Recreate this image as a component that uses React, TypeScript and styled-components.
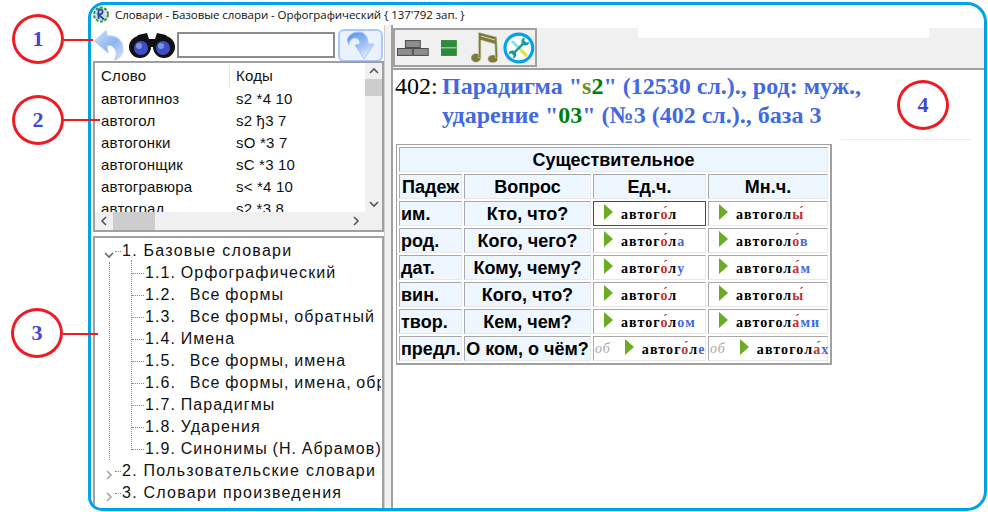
import styled, { createGlobalStyle } from "styled-components";

const GlobalStyle = createGlobalStyle`
  html, body { margin: 0; padding: 0; background: #fff; }
`;

type Part = { t: string; c?: "r" | "b"; a?: boolean };

const forms: { kase: string; question: string; sg: Part[]; pl: Part[]; prep?: boolean }[] = [
  {
    kase: "им.", question: "Кто, что?",
    sg: [{ t: "автог" }, { t: "о", c: "r", a: true }, { t: "л" }],
    pl: [{ t: "автогол" }, { t: "ы", c: "r", a: true }],
  },
  {
    kase: "род.", question: "Кого, чего?",
    sg: [{ t: "автог" }, { t: "о", c: "r", a: true }, { t: "л" }, { t: "а", c: "b" }],
    pl: [{ t: "автогол" }, { t: "о", c: "r", a: true }, { t: "в", c: "b" }],
  },
  {
    kase: "дат.", question: "Кому, чему?",
    sg: [{ t: "автог" }, { t: "о", c: "r", a: true }, { t: "л" }, { t: "у", c: "b" }],
    pl: [{ t: "автогол" }, { t: "а", c: "r", a: true }, { t: "м", c: "b" }],
  },
  {
    kase: "вин.", question: "Кого, что?",
    sg: [{ t: "автог" }, { t: "о", c: "r", a: true }, { t: "л" }],
    pl: [{ t: "автогол" }, { t: "ы", c: "r", a: true }],
  },
  {
    kase: "твор.", question: "Кем, чем?",
    sg: [{ t: "автог" }, { t: "о", c: "r", a: true }, { t: "л" }, { t: "ом", c: "b" }],
    pl: [{ t: "автогол" }, { t: "а", c: "r", a: true }, { t: "ми", c: "b" }],
  },
  {
    kase: "предл.", question: "О ком, о чём?", prep: true,
    sg: [{ t: "автог" }, { t: "о", c: "r", a: true }, { t: "л" }, { t: "е", c: "b" }],
    pl: [{ t: "автогол" }, { t: "а", c: "r", a: true }, { t: "х", c: "b" }],
  },
];

const words = [
  ["автогипноз", "s2 *4 10"],
  ["автогол", "s2 ђ3 7"],
  ["автогонки", "sO *3 7"],
  ["автогонщик", "sC *3 10"],
  ["автогравюра", "s< *4 10"],
  ["автоград", "s2 *3 8"],
];

const baseDicts = [
  "1.1. Орфографический",
  "1.2.\u00a0\u00a0\u00a0Все формы",
  "1.3.\u00a0\u00a0\u00a0Все формы, обратный",
  "1.4. Имена",
  "1.5.\u00a0\u00a0\u00a0Все формы, имена",
  "1.6.\u00a0\u00a0\u00a0Все формы, имена, обратный",
  "1.7. Парадигмы",
  "1.8. Ударения",
  "1.9. Синонимы (Н. Абрамов)",
];

function Word({ parts }: { parts: Part[] }) {
  return (
    <WordText>
      {parts.map((p, i) => (
        <Letter key={i} $c={p.c}>
          {p.t}
          {p.a && "\u0301"}
        </Letter>
      ))}
    </WordText>
  );
}

function Play() {
  return (
    <svg width="9" height="16" viewBox="0 0 9 16">
      <path d="M0 0 L9 8 L0 16 Z" fill="#6cab24" />
    </svg>
  );
}

function BackArrow() {
  return (
    <svg width="30" height="31" viewBox="0 0 30 31">
      <defs>
        <linearGradient id="bk" x1="0" y1="0" x2="1" y2="1">
          <stop offset="0" stopColor="#cfe0fb" />
          <stop offset="0.55" stopColor="#8fb4f2" />
          <stop offset="1" stopColor="#dbe7fb" />
        </linearGradient>
      </defs>
      <path
        d="M0.5 11 L12 0.5 L13 6 C22 5 29 10 29 19 C29 25 25 29 20 30 C23 26 23 21 20 18 C18 15 15 15 13 16 L14 23 Z"
        fill="url(#bk)"
        stroke="#b5cdf3"
      />
    </svg>
  );
}

function ForwardArrow() {
  return (
    <svg width="30" height="29" viewBox="0 0 30 29">
      <defs>
        <linearGradient id="fw" x1="0" y1="0" x2="0.6" y2="1">
          <stop offset="0" stopColor="#4f8fe8" />
          <stop offset="0.6" stopColor="#9cc0f7" />
          <stop offset="1" stopColor="#e2ecfc" />
        </linearGradient>
      </defs>
      <path
        d="M1 9 C3 3 8 1 13 1 C19 1 22 6 22 13 L28 13 L18 28 L9 14 L14 13 C14 10 12 7 9 7 C6 7 3 10 3 14 Z"
        fill="url(#fw)"
        stroke="#a9c6f5"
      />
    </svg>
  );
}

function Binoculars() {
  return (
    <BinocularsIcon width="46" height="25" viewBox="0 0 46 25">
      <path d="M9 2 L18 0 L20 6 L26 6 L28 0 L37 2 L42 9 L26 14 L20 14 L4 9 Z" fill="#111" />
      <circle cx="11" cy="14" r="11" fill="#111" />
      <circle cx="35" cy="14" r="11" fill="#111" />
      <circle cx="12" cy="15" r="7" fill="#3c50c4" />
      <circle cx="34" cy="15" r="7" fill="#3c50c4" />
      <circle cx="10" cy="13" r="3" fill="#7d8fe6" />
      <circle cx="32" cy="13" r="3" fill="#7d8fe6" />
    </BinocularsIcon>
  );
}

function Bricks() {
  return (
    <svg width="32" height="16" viewBox="0 0 32 16">
      <g fill="#8e8e8e" stroke="#4b4b4b">
        <rect x="8.5" y="0.5" width="15" height="7" />
        <rect x="0.5" y="8.5" width="15" height="7" />
        <rect x="16.5" y="8.5" width="15" height="7" />
      </g>
    </svg>
  );
}

function GreenBlock() {
  return (
    <svg width="16" height="16" viewBox="0 0 16 16">
      <rect width="16" height="16" fill="#2f8a3c" />
      <rect y="7" width="16" height="1.5" fill="#8fc79a" />
    </svg>
  );
}

function Notes() {
  return (
    <svg width="28" height="32" viewBox="0 0 28 32">
      <g fill="#7d7a3a" stroke="#d8d6c0" strokeWidth="0.6">
        <ellipse cx="5" cy="27" rx="5" ry="4.5" />
        <ellipse cx="22" cy="28" rx="5" ry="4" />
        <path d="M7.5 27 L7.5 1 L26 6 L27 27 L24.5 27 L24 13 L10 9 L10 27 Z" />
      </g>
      <path d="M10 5 L24.5 9" stroke="#d8d6c0" strokeWidth="1" />
    </svg>
  );
}

function Tools() {
  return (
    <svg width="32" height="32" viewBox="0 0 32 32">
      <circle cx="16" cy="16" r="14" fill="#fff" stroke="#00a2e8" strokeWidth="3.2" />
      <path d="M9 9 L18 18" stroke="#7fe3e0" strokeWidth="2.5" />
      <path d="M18 18 L24 24" stroke="#f5e02f" strokeWidth="3.5" />
      <path d="M10 22 L22 10" stroke="#1a9c9c" strokeWidth="2.5" />
      <path d="M22 5.5 A4 4 0 1 0 26.5 10 L23.5 10.5 L21.5 8.5 Z" fill="#1a9c9c" />
      <path d="M10 26.5 A4 4 0 1 0 5.5 22 L8.5 21.5 L10.5 23.5 Z" fill="#1a9c9c" />
    </svg>
  );
}

function AppLogo() {
  return (
    <svg width="16" height="17" viewBox="0 0 16 17">
      <circle cx="8" cy="8.5" r="7" fill="#cfe8d4" stroke="#2f9a55" strokeWidth="2" strokeDasharray="3 1.5" />
      <path d="M5.5 3.5 L5.5 13 M5.5 3.5 C11 3 11 8.5 5.5 8.5 L11 13.5" fill="none" stroke="#2a3fb5" strokeWidth="1.8" />
    </svg>
  );
}

function Chevron({ open }: { open?: boolean }) {
  return (
    <ChevronBox>
      <svg width="10" height="10" viewBox="0 0 10 10">
        <path
          d={open ? "M1 3 L5 7 L9 3" : "M3 1 L7 5 L3 9"}
          fill="none"
          stroke={open ? "#6a6a6a" : "#a6a6a6"}
          strokeWidth="1.6"
        />
      </svg>
    </ChevronBox>
  );
}

function ScrollGlyph({ d }: { d: string }) {
  return (
    <svg width="10" height="10" viewBox="0 0 10 10">
      <path d={d} fill="none" stroke="#555" strokeWidth="1.6" />
    </svg>
  );
}

export default function App() {
  return (
    <Page>
      <GlobalStyle />
      <Frame>
        <TitleBar>
          <AppLogo />
          <TitleText>Словари - Базовые словари - Орфографический {"{"} 137'792 зап. {"}"}</TitleText>
        </TitleBar>
        <Main>
          <LeftPane>
            <SearchBar>
              <BackArrow />
              <Binoculars />
              <SearchInput />
              <ForwardButton>
                <ForwardArrow />
              </ForwardButton>
            </SearchBar>
            <ListBox>
              <ListArea>
                <ListHead>
                  <HeadCell $first>Слово</HeadCell>
                  <HeadCell>Коды</HeadCell>
                </ListHead>
                {words.map(([w, c]) => (
                  <ListRow key={w}>
                    <WordCell>{w}</WordCell>
                    <CodeCell>{c}</CodeCell>
                  </ListRow>
                ))}
              </ListArea>
              <VScroll>
                <ScrollGlyph d="M1 7 L5 3 L9 7" />
                <VTrack>
                  <VThumb />
                </VTrack>
                <ScrollGlyph d="M1 3 L5 7 L9 3" />
              </VScroll>
              <HScroll>
                <ScrollGlyph d="M7 1 L3 5 L7 9" />
                <HTrack>
                  <HThumb />
                </HTrack>
                <ScrollGlyph d="M3 1 L7 5 L3 9" />
                <Corner />
              </HScroll>
            </ListBox>
            <TreeBox>
              <TreeRoot>
                <Chevron open />
                <Stub />
                <span>1. Базовые словари</span>
              </TreeRoot>
              <TreeGroup>
                {baseDicts.map((d) => (
                  <TreeLeaf key={d}>{d}</TreeLeaf>
                ))}
              </TreeGroup>
              <TreeRoot>
                <Chevron />
                <Stub />
                <span>2. Пользовательские словари</span>
              </TreeRoot>
              <TreeRoot>
                <Chevron />
                <Stub />
                <span>3. Словари произведения</span>
              </TreeRoot>
            </TreeBox>
          </LeftPane>
          <Splitter />
          <RightPane>
            <ToolStrip>
              <IconGroup>
                <Bricks />
                <GreenBlock />
                <Notes />
                <Tools />
              </IconGroup>
              <Notch />
            </ToolStrip>
            <Content>
              <Heading>
                <Count>402:</Count>
                <HeadingText>
                  Парадигма "<Code>s<CodeGreen>2</CodeGreen></Code>" (12530 сл.)., род: муж.,
                  <br />
                  ударение "<CodeGreen>03</CodeGreen>" (№3 (402 сл.)., база 3
                </HeadingText>
              </Heading>
              <TableRow>
                <Paradigm>
                  <colgroup>
                    <col width="63" />
                    <col width="127" />
                    <col width="113" />
                    <col />
                  </colgroup>
                  <tbody>
                    <tr>
                      <TitleCell colSpan={4}>Существительное</TitleCell>
                    </tr>
                    <tr>
                      <HeadTd>Падеж</HeadTd>
                      <HeadTd>Вопрос</HeadTd>
                      <HeadTd>Ед.ч.</HeadTd>
                      <HeadTd>Мн.ч.</HeadTd>
                    </tr>
                    {forms.map((f, i) => (
                      <tr key={f.kase}>
                        <CaseTd>{f.kase}</CaseTd>
                        <HeadTd>{f.question}</HeadTd>
                        <FormTd $active={i === 0}>
                          <FormInner>
                            {f.prep && <Prep>об</Prep>}
                            <Play />
                            <Word parts={f.sg} />
                          </FormInner>
                        </FormTd>
                        <FormTd>
                          <FormInner>
                            {f.prep && <Prep>об</Prep>}
                            <Play />
                            <Word parts={f.pl} />
                          </FormInner>
                        </FormTd>
                      </tr>
                    ))}
                  </tbody>
                </Paradigm>
                <Rule />
              </TableRow>
            </Content>
          </RightPane>
        </Main>
      </Frame>

      <Callout $x={12} $y={14}>1</Callout>
      <Leader $x={64} $y={39} $w={29} />
      <Callout $x={12} $y={95}>2</Callout>
      <Leader $x={64} $y={119} $w={36} />
      <Callout $x={11} $y={308}>3</Callout>
      <Leader $x={63} $y={333} $w={35} />
      <Callout $x={897} $y={80}>4</Callout>
    </Page>
  );
}

const Page = styled.div`
  position: relative;
  width: 988px;
  height: 512px;
  overflow: hidden;
  background: #fff;
  padding: 2px 1px 0 88px;
  box-sizing: border-box;
`;

const Frame = styled.div`
  height: 509px;
  box-sizing: border-box;
  border: 3px solid #00a2e8;
  border-radius: 16px 20px 20px 14px;
  overflow: hidden;
  display: flex;
  flex-direction: column;
  background: #fff;
`;

const TitleBar = styled.div`
  height: 21px;
  flex: none;
  display: flex;
  align-items: center;
  gap: 6px;
  padding-left: 2px;
  margin-top: -1px;
`;

const TitleText = styled.span`
  font: 11.5px "Open Sans", sans-serif;
  color: #111;
  white-space: nowrap;
  letter-spacing: -0.07px;
`;

const Main = styled.div`
  flex: 1;
  min-height: 0;
  display: flex;
`;

const LeftPane = styled.div`
  width: 293px;
  flex: none;
  display: flex;
  flex-direction: column;
`;

const SearchBar = styled.div`
  height: 36px;
  flex: none;
  box-sizing: border-box;
  display: flex;
  align-items: center;
  padding: 4px 0 0 3px;
`;

const BinocularsIcon = styled.svg`
  margin-left: 5px;
  flex: none;
`;

const SearchInput = styled.div`
  width: 154px;
  height: 22px;
  border: 2px solid #8c8c8c;
  margin-left: 2px;
  margin-right: 3px;
`;

const ForwardButton = styled.div`
  width: 41px;
  height: 29px;
  border: 2px solid #a9c9ff;
  border-radius: 6px;
  background: #eaf2fd;
  display: flex;
  align-items: center;
  justify-content: center;
`;

const ListBox = styled.div`
  height: 171px;
  flex: none;
  box-sizing: border-box;
  border: 2px solid #a0a0a0;
  display: grid;
  grid-template-columns: 1fr 17px;
  grid-template-rows: 1fr 18px;
  margin-left: 2px;
`;

const ListArea = styled.div`
  overflow: hidden;
  background: #fff;
  font: 15px "Liberation Sans", sans-serif;
  letter-spacing: 0.2px;
  color: #111;
`;

const ListHead = styled.div`
  display: flex;
  height: 25px;
  align-items: center;
`;

const HeadCell = styled.div<{ $first?: boolean }>`
  width: ${(p) => (p.$first ? "128px" : "auto")};
  height: 22px;
  line-height: 22px;
  padding-left: 6px;
  border-right: ${(p) => (p.$first ? "1px solid #e4e4e4" : "0")};
`;

const ListRow = styled.div`
  display: flex;
  height: 22px;
  line-height: 22px;
`;

const WordCell = styled.div`
  width: 128px;
  padding-left: 6px;
  white-space: nowrap;
`;

const CodeCell = styled.div`
  padding-left: 7px;
  white-space: nowrap;
  font-family: "Liberation Sans", "DejaVu Sans", sans-serif;
`;

const VScroll = styled.div`
  background: #f0f0f0;
  display: flex;
  flex-direction: column;
  align-items: center;
  padding: 3px 0;
`;

const VTrack = styled.div`
  flex: 1;
  width: 100%;
  padding-top: 3px;
`;

const VThumb = styled.div`
  height: 17px;
  background: #cdcdcd;
`;

const HScroll = styled.div`
  grid-column: 1 / 3;
  background: #f0f0f0;
  display: flex;
  align-items: center;
  padding-left: 4px;
`;

const HTrack = styled.div`
  flex: 1;
  height: 100%;
  padding-left: 4px;
`;

const HThumb = styled.div`
  width: 42px;
  height: 100%;
  background: #cdcdcd;
`;

const Corner = styled.div`
  width: 21px;
  flex: none;
`;

const TreeBox = styled.div`
  flex: 1;
  min-height: 0;
  margin: 4px 0 0 2px;
  box-sizing: border-box;
  border: solid #a0a0a0;
  border-width: 2px 2px 0 2px;
  padding-top: 2px;
  overflow: hidden;
  font: 16px "Liberation Sans", sans-serif;
  letter-spacing: 1.1px;
  color: #111;
  white-space: nowrap;
`;

const TreeRoot = styled.div`
  height: 22px;
  display: flex;
  align-items: center;
  padding-left: 9px;
  letter-spacing: 1.25px;
`;

const ChevronBox = styled.span`
  width: 10px;
  height: 10px;
  display: block;
  flex: none;
`;

const Stub = styled.span`
  width: 6px;
  border-top: 1px dotted #8a8a8a;
  margin: 0 1px 0 1px;
`;

const TreeGroup = styled.div`
  margin-left: 14px;
  border-left: 1px dotted #8a8a8a;
  padding-left: 21px;
  position: relative;
  &::before {
    content: "";
    position: absolute;
    left: 21px;
    top: -2px;
    bottom: 10px;
    border-left: 1px dotted #8a8a8a;
  }
`;

const TreeLeaf = styled.div`
  height: 22px;
  line-height: 22px;
  padding-left: 14px;
  position: relative;
  width: 236px;
  overflow: hidden;
  word-spacing: -1px;
  &::before {
    content: "";
    position: absolute;
    left: 1px;
    width: 12px;
    top: 11px;
    border-top: 1px dotted #8a8a8a;
  }
`;

const Splitter = styled.div`
  width: 9px;
  flex: none;
  box-sizing: border-box;
  background: #f0f0f0;
  border-left: 1px solid #d0d0d0;
  border-right: 2px solid #a0a0a0;
`;

const RightPane = styled.div`
  flex: 1;
  min-width: 0;
  display: flex;
  flex-direction: column;
`;

const ToolStrip = styled.div`
  height: 40px;
  flex: none;
  margin-top: 3px;
  background: #f0f0f0;
  display: flex;
  align-items: flex-start;
`;

const IconGroup = styled.div`
  width: 144px;
  height: 39px;
  box-sizing: border-box;
  border: 2px solid #a0a0a0;
  display: flex;
  align-items: center;
  padding-left: 2px;
  gap: 12px;
  & > svg:nth-child(3) { margin-left: 2px; margin-top: -1px; }
  & > svg:nth-child(4) { margin-left: -7px; }
`;

const Notch = styled.div`
  width: 291px;
  height: 10px;
  background: #fff;
  margin-left: 101px;
`;

const Content = styled.div`
  flex: 1;
  min-height: 0;
  border-top: 2px solid #a0a0a0;
  padding: 2px 0 0 3px;
`;

const Heading = styled.div`
  display: flex;
  align-items: flex-start;
  margin-left: -1px;
  line-height: 29px;
`;

const Count = styled.div`
  width: 47px;
  flex: none;
  font: 24px/29px "Liberation Serif", serif;
  color: #000;
`;

const HeadingText = styled.div`
  font: bold 24px/29px "Liberation Serif", serif;
  color: #4169e1;
  white-space: nowrap;
`;

const Code = styled.span`
  color: #6b8e23;
`;

const CodeGreen = styled.span`
  color: #008000;
`;

const TableRow = styled.div`
  display: flex;
  align-items: flex-start;
  margin-top: 14px;
`;

const Rule = styled.div`
  width: 130px;
  height: 1px;
  margin: -5px 0 0 9px;
  background: #ececec;
`;

const Paradigm = styled.table`
  flex: none;
  width: 436px;
  table-layout: fixed;
  border-collapse: separate;
  border-spacing: 2px;
  border: solid #a0a0a0;
  border-width: 1px 2px 2px 1px;
  font: bold 18px/1 "Liberation Sans", sans-serif;
  color: #000;
  & td {
    padding: 0;
    height: 23px;
    box-sizing: content-box;
    border: 1px solid #e6e6e6;
    border-color: #a8a8a8 #e8e8e8 #e8e8e8 #a8a8a8;
  }
`;

const TitleCell = styled.td`
  background: #eef7ff;
  text-align: center;
`;

const HeadTd = styled.td`
  background: #eef7ff;
  text-align: center;
  white-space: nowrap;
`;

const CaseTd = styled.td`
  background: #eef7ff;
  padding-left: 1px !important;
  white-space: nowrap;
`;

const FormTd = styled.td<{ $active?: boolean }>`
  background: #fff;
  ${(p) => (p.$active ? "border: 1px solid #d01010 !important;" : "")}
`;

const FormInner = styled.div`
  display: flex;
  align-items: center;
  gap: 8px;
  padding-left: 10px;
  height: 23px;
  & > svg { margin-top: -3px; flex: none; }
`;

const Prep = styled.span`
  font: italic 14px "Liberation Serif", serif;
  color: #a8a8a8;
  margin: 0 6px 0 -9px;
  letter-spacing: 1px;
`;

const WordText = styled.span`
  font: bold 14px "Liberation Serif", serif;
  letter-spacing: 1.1px;
  margin-top: 2px;
  white-space: nowrap;
`;

const Letter = styled.span<{ $c?: "r" | "b" }>`
  color: ${(p) => (p.$c === "r" ? "#c03030" : p.$c === "b" ? "#4169e1" : "#000")};
`;

const Callout = styled.div<{ $x: number; $y: number }>`
  position: absolute;
  left: ${(p) => p.$x}px;
  top: ${(p) => p.$y}px;
  width: 52px;
  height: 50px;
  box-sizing: border-box;
  border: 3px solid #ed1c24;
  border-radius: 50%;
  background: #fff;
  display: flex;
  align-items: center;
  justify-content: center;
  font: bold 22px "Liberation Serif", serif;
  color: #3f48cc;
`;

const Leader = styled.div<{ $x: number; $y: number; $w: number }>`
  position: absolute;
  left: ${(p) => p.$x}px;
  top: ${(p) => p.$y}px;
  width: ${(p) => p.$w}px;
  height: 2px;
  background: #ed1c24;
`;
